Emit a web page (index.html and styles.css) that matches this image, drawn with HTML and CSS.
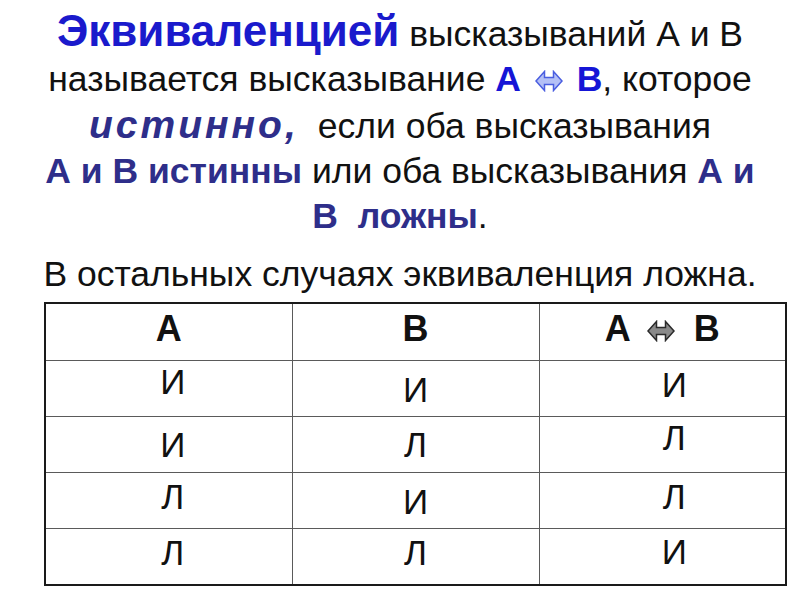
FILE: index.html
```html
<!DOCTYPE html>
<html lang="ru">
<head>
<meta charset="utf-8">
<title>Эквиваленция</title>
<link rel="stylesheet" href="styles.css">
</head>
<body>
<div class="page">
  <div class="intro">
    <div class="line l1"><span class="term">Эквиваленцией</span> высказываний А и В</div>
    <div class="line l2">называется высказывание <span class="hl">А <svg class="arr arr-blue" viewBox="0 0 28 22" width="28" height="22"><path d="M1 11 L9.5 1.5 L9.5 7.5 L18.5 7.5 L18.5 1.5 L27 11 L18.5 20.5 L18.5 14.5 L9.5 14.5 L9.5 20.5 Z"/></svg> В</span>, которое</div>
    <div class="line l3"><span class="true">истинно,</span><span class="gap"></span>если оба высказывания</div>
    <div class="line l4"><span class="navy">А и В истинны</span> или оба высказывания <span class="navy">А и</span></div>
    <div class="line l5"><span class="navy">В&nbsp; ложны</span>.</div>
  </div>
  <div class="rest">В остальных случаях эквиваленция ложна.</div>
  <table class="truth">
    <tr class="head">
      <th>А</th>
      <th>В</th>
      <th class="c3">А <svg class="arr arr-grey" viewBox="0 0 28 22" width="28" height="22"><path d="M1 11 L9.5 1.5 L9.5 7.5 L18.5 7.5 L18.5 1.5 L27 11 L18.5 20.5 L18.5 14.5 L9.5 14.5 L9.5 20.5 Z"/></svg> В</th>
    </tr>
    <tr>
      <td class="ca p1">И</td>
      <td class="cb p9">И</td>
      <td class="cc p4">И</td>
    </tr>
    <tr>
      <td class="ca p8">И</td>
      <td class="cb p8">Л</td>
      <td class="cc p1">Л</td>
    </tr>
    <tr>
      <td class="ca p4">Л</td>
      <td class="cb p9">И</td>
      <td class="cc p4">Л</td>
    </tr>
    <tr>
      <td class="ca p4">Л</td>
      <td class="cb p4">Л</td>
      <td class="cc p3">И</td>
    </tr>
  </table>
</div>
</body>
</html>
```
FILE: styles.css
```css
html, body {
  margin: 0;
  padding: 0;
  background: #ffffff;
}
.page {
  width: 800px;
  height: 600px;
  font-family: "Liberation Sans", Arial, sans-serif;
  color: #111111;
  overflow: hidden;
}
.intro {
  padding-top: 8px;
}
.line {
  text-align: center;
  font-size: 35.5px;
  line-height: 45px;
  white-space: nowrap;
}
.term {
  font-size: 44px;
  font-weight: bold;
  color: #1a1acc;
}
.hl {
  font-weight: bold;
  color: #1515d6;
}
.true {
  font-size: 39px;
  letter-spacing: 3px;
  font-weight: bold;
  font-style: italic;
  color: #2e2e8a;
}
.gap {
  display: inline-block;
  width: 19px;
}
.navy {
  font-weight: bold;
  color: #2e2e8a;
}
.arr {
  vertical-align: -1px;
  margin: 0 4px;
}
.arr-blue path {
  fill: #b4c0f6;
  stroke: #4a5ee0;
  stroke-width: 1.5;
}
.arr-grey {
  margin: 0 9px 0 6px;
}
.arr-grey path {
  fill: #8a8a8a;
  stroke: #2a2a2a;
  stroke-width: 1.5;
}
.rest {
  margin-top: 15px;
  text-align: center;
  font-size: 35.5px;
  line-height: 40px;
  white-space: nowrap;
}
.truth {
  margin: 8px 0 0 44px;
  width: 743px;
  border-collapse: collapse;
  border: 2px solid #1a1a1a;
  table-layout: fixed;
}
.truth th,
.truth td {
  border: 1px solid #5a5a5a;
  padding: 0;
  text-align: center;
  vertical-align: top;
  line-height: 40px;
  color: #111111;
}
.truth th {
  font-weight: bold;
  font-size: 36px;
  padding-top: 5px;
  height: 51px;
}
.truth td {
  font-weight: normal;
  font-size: 35px;
}
.truth td.ca { padding-left: 8px; }
.truth td.cc { padding-left: 24px; }
.truth td.p1 { padding-top: 1px; height: 54px; }
.truth td.p3 { padding-top: 3px; height: 52px; }
.truth td.p4 { padding-top: 4px; height: 51px; }
.truth td.p8 { padding-top: 8px; height: 47px; }
.truth td.p9 { padding-top: 9px; height: 46px; }
```
